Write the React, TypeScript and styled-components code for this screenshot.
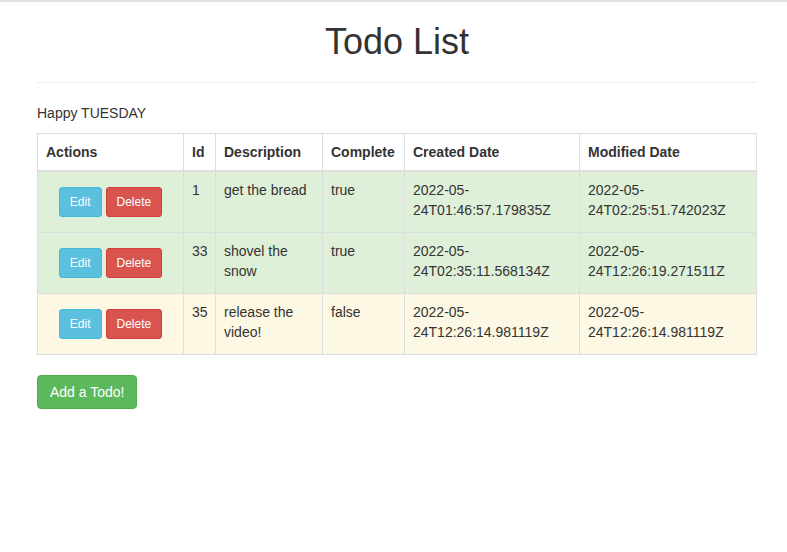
import React from 'react'
import styled, { createGlobalStyle } from 'styled-components'

const GlobalStyle = createGlobalStyle`
  * {
    box-sizing: border-box;
  }
  body {
    margin: 0;
    border-top: 2px solid #e3e3e3;
    background: #fff;
    color: #333;
    font-family: "Liberation Sans", Arial, Helvetica, sans-serif;
    font-size: 14px;
    line-height: 1.42857143;
  }
`

const Container = styled.div`
  width: 720px;
  margin-left: 37px;
`

const Title = styled.h1`
  margin: 20px 0 0;
  font-size: 36px;
  font-weight: 500;
  line-height: 1.1;
  text-align: center;
`

const Rule = styled.hr`
  margin: 20px 0;
  border: 0;
  border-top: 1px solid #eee;
`

const Greeting = styled.p`
  margin: 0 0 10px;
`

const Table = styled.table`
  width: 719px;
  table-layout: fixed;
  border-collapse: collapse;
  border: 1px solid #ddd;
  margin-bottom: 20px;
`

const HeadCell = styled.th`
  padding: 8px;
  text-align: left;
  vertical-align: bottom;
  font-weight: bold;
  border: 1px solid #ddd;
  border-bottom-width: 2px;
`

const Row = styled.tr<{ $tone: 'success' | 'warning' }>`
  background: ${(p) => (p.$tone === 'success' ? '#dff0d8' : '#fcf8e3')};
`

const Cell = styled.td`
  padding: 8px;
  vertical-align: top;
  border: 1px solid #ddd;
`

const Actions = styled.div`
  display: flex;
  justify-content: center;
  gap: 4px;
  padding: 7px 0;
`

const colors = {
  info: ['#5bc0de', '#46b8da'],
  danger: ['#d9534f', '#d43f3a'],
  success: ['#5cb85c', '#4cae4c'],
}

const Button = styled.button<{ $kind: keyof typeof colors; $small?: boolean }>`
  display: inline-block;
  font-family: inherit;
  font-weight: 400;
  color: #fff;
  cursor: pointer;
  background: ${(p) => colors[p.$kind][0]};
  border: 1px solid ${(p) => colors[p.$kind][1]};
  padding: ${(p) => (p.$small ? '5px 10px' : '6px 12px')};
  font-size: ${(p) => (p.$small ? '12px' : '14px')};
  line-height: ${(p) => (p.$small ? 1.5 : 1.42857143)};
  border-radius: ${(p) => (p.$small ? '3px' : '4px')};
`

type Todo = {
  id: number
  description: string
  complete: boolean
  created: string
  modified: string
}

const todos: Todo[] = [
  {
    id: 1,
    description: 'get the bread',
    complete: true,
    created: '2022-05-24T01:46:57.179835Z',
    modified: '2022-05-24T02:25:51.742023Z',
  },
  {
    id: 33,
    description: 'shovel the snow',
    complete: true,
    created: '2022-05-24T02:35:11.568134Z',
    modified: '2022-05-24T12:26:19.271511Z',
  },
  {
    id: 35,
    description: 'release the video!',
    complete: false,
    created: '2022-05-24T12:26:14.981119Z',
    modified: '2022-05-24T12:26:14.981119Z',
  },
]

const columns = [146, 32, 107, 82, 175, 177]

const App = () => {
  return (
    <>
      <GlobalStyle />
      <Container>
        <Title>Todo List</Title>
        <Rule />
        <Greeting>Happy TUESDAY</Greeting>
        <Table>
          <colgroup>
            {columns.map((w, i) => (
              <col key={i} style={{ width: w }} />
            ))}
          </colgroup>
          <thead>
            <tr>
              <HeadCell>Actions</HeadCell>
              <HeadCell>Id</HeadCell>
              <HeadCell>Description</HeadCell>
              <HeadCell>Complete</HeadCell>
              <HeadCell>Created Date</HeadCell>
              <HeadCell>Modified Date</HeadCell>
            </tr>
          </thead>
          <tbody>
            {todos.map((todo) => (
              <Row key={todo.id} $tone={todo.complete ? 'success' : 'warning'}>
                <Cell>
                  <Actions>
                    <Button $kind="info" $small>
                      Edit
                    </Button>
                    <Button $kind="danger" $small>
                      Delete
                    </Button>
                  </Actions>
                </Cell>
                <Cell>{todo.id}</Cell>
                <Cell>{todo.description}</Cell>
                <Cell>{String(todo.complete)}</Cell>
                <Cell>{todo.created}</Cell>
                <Cell>{todo.modified}</Cell>
              </Row>
            ))}
          </tbody>
        </Table>
        <Button $kind="success">Add a Todo!</Button>
      </Container>
    </>
  )
}

export default App
